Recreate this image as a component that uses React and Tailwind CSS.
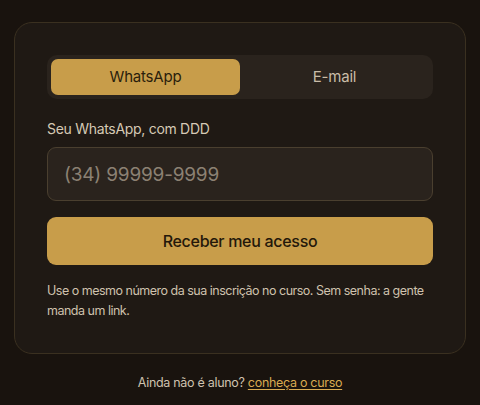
import React, { useState } from "react";

const App = () => {
  const [tab, setTab] = useState("whatsapp");

  return (
    <div
      className="min-h-[405px] bg-[#19130e] px-[14px] pt-[22px]"
      style={{ fontFamily: "Inter, 'Noto Sans', sans-serif" }}
    >
      <div className="rounded-[18px] border border-[#3a3020] bg-[#1f1914] px-8 pt-8 pb-[32px]">
        <div className="flex rounded-[10px] bg-[#2a231d] p-1">
          <button
            onClick={() => setTab("whatsapp")}
            className={`h-9 flex-1 rounded-[7px] text-[15px] tracking-[-0.2px] ${
              tab === "whatsapp" ? "bg-[#c89d4a] text-[#2a1d0c]" : "text-[#c9bca8]"
            }`}
          >
            WhatsApp
          </button>
          <button
            onClick={() => setTab("email")}
            className={`h-9 flex-1 rounded-[7px] text-[15px] tracking-[-0.2px] ${
              tab === "email" ? "bg-[#c89d4a] text-[#2a1d0c]" : "text-[#c9bca8]"
            }`}
          >
            E-mail
          </button>
        </div>

        <label className="mt-[20px] block text-[14px] leading-5 tracking-[-0.3px] text-[#d6c9b5]">
          Seu WhatsApp, com DDD
        </label>
        <input
          placeholder="(34) 99999-9999"
          className="mt-[8px] block h-[54px] w-full rounded-[9px] border border-[#4a3f2f] bg-[#2a231d] px-4 text-[19px] tracking-[-0.2px] text-[#e8dcc8] outline-none placeholder:text-[#8c8173]"
        />

        <button className="mt-4 h-12 w-full rounded-[9px] bg-[#c89d4a] text-[16px] font-medium tracking-[-0.3px] text-[#24180a]">
          Receber meu acesso
        </button>

        <p className="mt-[16px] text-[12.5px] leading-[20px] tracking-[-0.5px] text-[#cfc2ae]">
          Use o mesmo número da sua inscrição no curso. Sem senha: a gente
          manda um link.
        </p>
      </div>

      <p className="mt-[20px] text-center text-[12.5px] tracking-[-0.3px] text-[#cfc2ae]">
        Ainda não é aluno?{" "}
        <a href="#" className="text-[#d9ab52] underline underline-offset-2">
          conheça o curso
        </a>
      </p>
    </div>
  );
};

export default App;
